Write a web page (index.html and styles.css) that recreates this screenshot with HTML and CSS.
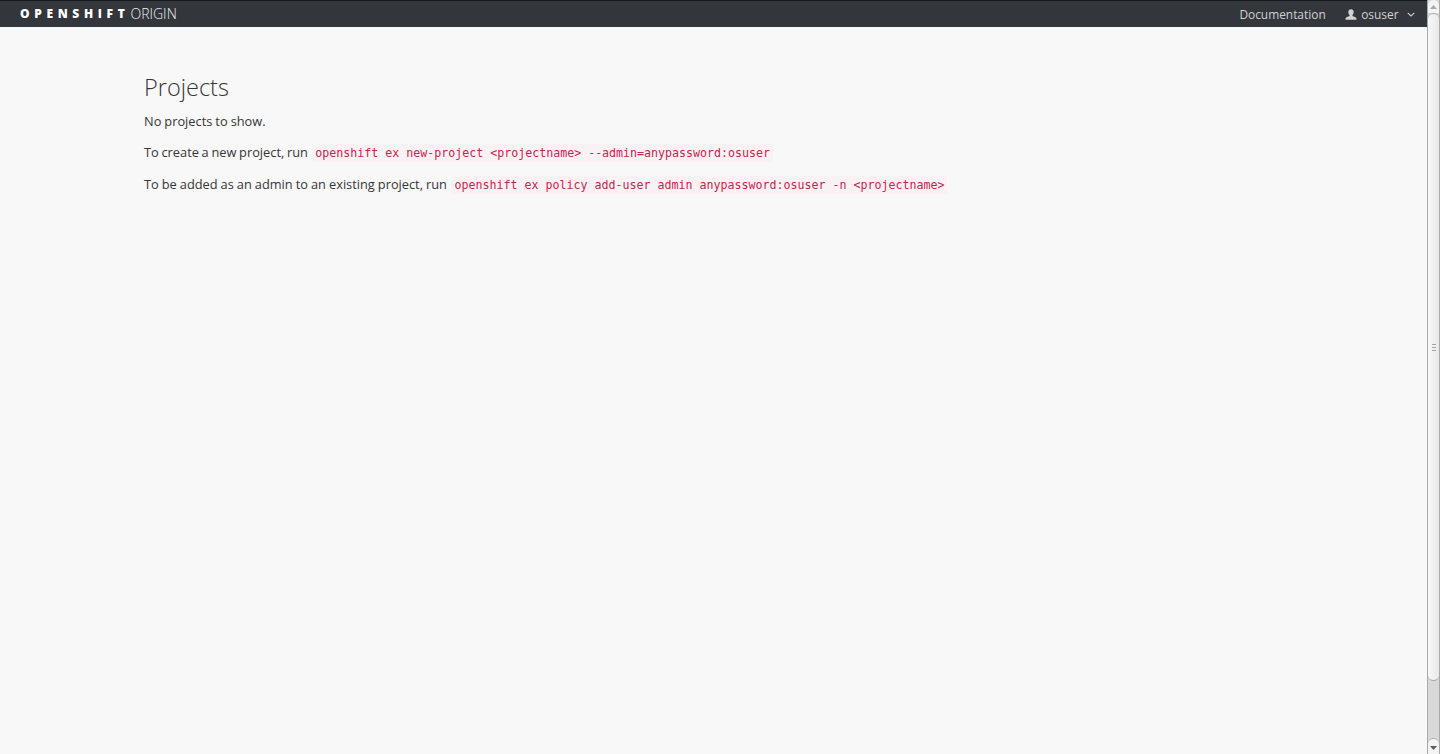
FILE: index.html
```html
<!DOCTYPE html>
<html lang="en">
<head>
<meta charset="utf-8">
<title>OpenShift Origin</title>
<link rel="stylesheet" href="styles.css">
</head>
<body>
<div class="page">
  <div class="main">
    <header class="navbar">
      <a class="brand"><span class="brand-bold">OPENSHIFT</span><span class="brand-light">ORIGIN</span></a>
      <nav class="nav-right">
        <a class="nav-link">Documentation</a>
        <a class="nav-user">
          <svg class="user-icon" width="12" height="12" viewBox="0 0 12 12"><path d="M6 0.2c-1.7 0-2.7 1.2-2.7 2.9 0 1.2.5 2.3 1.2 2.9v1c-1.5.6-3.6 1.1-3.9 2.2-.1.5-.1 1-.1 1.6h11c0-.6 0-1.1-.1-1.6-.3-1.1-2.4-1.6-3.9-2.2V6c.7-.6 1.2-1.7 1.2-2.9C8.7 1.4 7.7.2 6 .2z"/></svg>
          <span>osuser</span>
          <svg class="caret" width="8" height="5" viewBox="0 0 8 5"><path d="M0.7 0.8L4 4L7.3 0.8" fill="none" stroke="currentColor" stroke-width="1.1"/></svg>
        </a>
      </nav>
    </header>
    <main class="content">
      <h1 class="title">Projects</h1>
      <p class="para">No projects to show.</p>
      <p class="para para-tight">To create a new project, run <code class="cmd">openshift ex new-project &lt;projectname&gt; --admin=anypassword:osuser</code></p>
      <p class="para">To be added as an admin to an existing project, run <code class="cmd">openshift ex policy add-user admin anypassword:osuser -n &lt;projectname&gt;</code></p>
    </main>
  </div>
  <div class="scrollbar">
    <div class="arrow arrow-up"><svg width="7" height="4" viewBox="0 0 7 4"><path d="M3.5 0L7 4H0z"/></svg></div>
    <div class="track">
      <div class="thumb"><span class="grip"></span><span class="grip"></span><span class="grip"></span></div>
    </div>
    <div class="arrow arrow-down"><svg width="7" height="4" viewBox="0 0 7 4"><path d="M0 0H7L3.5 4z"/></svg></div>
  </div>
</div>
</body>
</html>
```
FILE: styles.css
```css
* { box-sizing: border-box; }
html, body { margin: 0; height: 100%; overflow: hidden; }
body {
  font-family: "Open Sans", "Liberation Sans", sans-serif;
  font-size: 12.8px;
  word-spacing: -0.3px;
  line-height: 18.5px;
  color: #363636;
  background: #f8f8f9;
}
.page { display: flex; height: 754px; }
.main { flex: 1; min-width: 0; }
.navbar {
  height: 27px;
  background: #33363b;
  border-top: 1px solid #16181a;
  display: flex;
  align-items: center;
  justify-content: space-between;
  padding: 1px 12px 0 20px;
  color: #d1d1d1;
  font-size: 11.9px;
}
.brand { display: flex; align-items: center; color: #e8e8e8; }
.brand-bold { font-weight: 800; font-size: 12px; letter-spacing: 4.65px; color: #fff; }
.brand-light { font-weight: 300; font-size: 14px; color: #f0f0f0; margin-left: 1px; }
.nav-right { display: flex; align-items: center; gap: 19.5px; }
.nav-user { display: flex; align-items: center; }
.user-icon { fill: #d1d1d1; margin-right: 4px; }
.caret { margin-left: 8.5px; color: #d1d1d1; }
.content { padding: 46px 144px 0; }
.title {
  margin: 0 0 10.8px;
  font-weight: 300;
  font-size: 23.5px;
  line-height: 28px;
  color: #363636;
}
.para { margin: 0 0 13px; }
.para-tight { word-spacing: -0.6px; }
.cmd {
  font-family: "DejaVu Sans Mono", "Liberation Mono", monospace;
  font-size: 11.63px;
  line-height: 1;
  word-spacing: 0;
  color: #c7254e;
  background: #f9f2f4;
  padding: 2px 3px;
  margin-left: 1.5px;
}
.scrollbar {
  width: 13px;
  height: 100%;
  display: flex;
  flex-direction: column;
  background: #d8d8d8;
  border-left: 1px solid #a9a9a9;
  border-right: 1px solid #a9a9a9;
}
.arrow {
  flex: none;
  display: flex;
  justify-content: center;
  background: #f4f4f4;
}
.arrow-up { height: 13px; align-items: center; border-radius: 6px 6px 0 0; }
.arrow-up svg { fill: #a8a8a8; }
.arrow-down {
  height: 16px;
  padding-top: 7px;
  border-top: 1px solid #a9a9a9;
  border-radius: 6px 6px 0 0;
}
.arrow-down svg { fill: #5c5c5c; }
.track { flex: 1; display: flex; flex-direction: column; }
.thumb {
  height: 668px;
  background: linear-gradient(90deg, #f8f8f8, #e9e9e9);
  border-top: 1px solid #a9a9a9;
  border-bottom: 1px solid #a9a9a9;
  border-radius: 6px;
  display: flex;
  flex-direction: column;
  align-items: center;
  justify-content: center;
  gap: 2px;
}
.grip { width: 4px; height: 1px; background: #a5a5a5; }
```
